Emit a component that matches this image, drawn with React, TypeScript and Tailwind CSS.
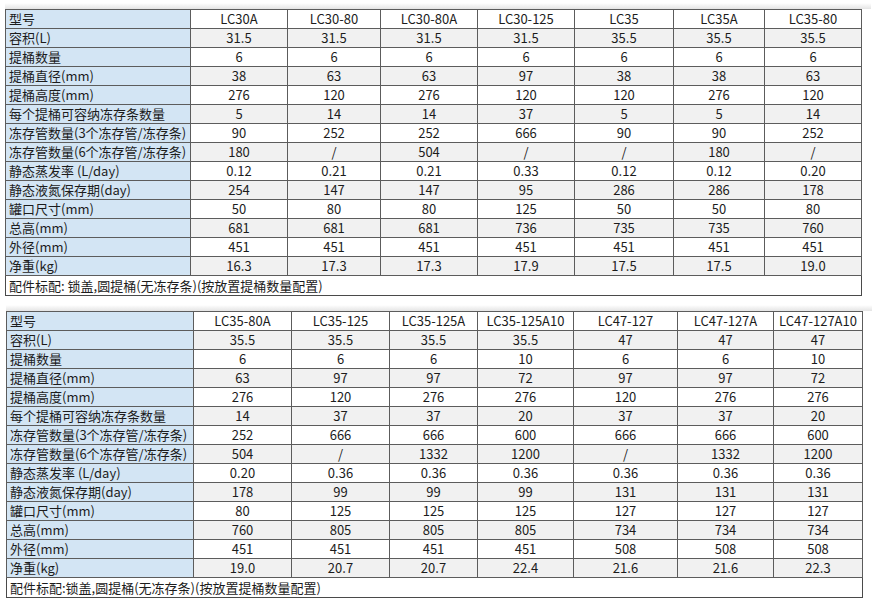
const labels = [
  "型号",
  "容积(L)",
  "提桶数量",
  "提桶直径(mm)",
  "提桶高度(mm)",
  "每个提桶可容纳冻存条数量",
  "冻存管数量(3个冻存管/冻存条)",
  "冻存管数量(6个冻存管/冻存条)",
  "静态蒸发率 (L/day)",
  "静态液氮保存期(day)",
  "罐口尺寸(mm)",
  "总高(mm)",
  "外径(mm)",
  "净重(kg)",
];

type Spec = {
  widths: number[];
  columns: string[][];
  note: string;
};

const specs: Spec[] = [
  {
    widths: [185, 97, 93, 97, 97, 99, 91, 97],
    columns: [
      ["LC30A", "31.5", "6", "38", "276", "5", "90", "180", "0.12", "254", "50", "681", "451", "16.3"],
      ["LC30-80", "31.5", "6", "63", "120", "14", "252", "/", "0.21", "147", "80", "681", "451", "17.3"],
      ["LC30-80A", "31.5", "6", "63", "276", "14", "252", "504", "0.21", "147", "80", "681", "451", "17.3"],
      ["LC30-125", "31.5", "6", "97", "120", "37", "666", "/", "0.33", "95", "125", "736", "451", "17.9"],
      ["LC35", "35.5", "6", "38", "120", "5", "90", "/", "0.12", "286", "50", "735", "451", "17.5"],
      ["LC35A", "35.5", "6", "38", "276", "5", "90", "180", "0.12", "286", "50", "735", "451", "17.5"],
      ["LC35-80", "35.5", "6", "63", "120", "14", "252", "/", "0.20", "178", "80", "760", "451", "19.0"],
    ],
    note: "配件标配: 锁盖,圆提桶(无冻存条)(按放置提桶数量配置)",
  },
  {
    widths: [187, 98, 98, 88, 96, 104, 96, 89],
    columns: [
      ["LC35-80A", "35.5", "6", "63", "276", "14", "252", "504", "0.20", "178", "80", "760", "451", "19.0"],
      ["LC35-125", "35.5", "6", "97", "120", "37", "666", "/", "0.36", "99", "125", "805", "451", "20.7"],
      ["LC35-125A", "35.5", "6", "97", "276", "37", "666", "1332", "0.36", "99", "125", "805", "451", "20.7"],
      ["LC35-125A10", "35.5", "10", "72", "276", "20", "600", "1200", "0.36", "99", "125", "805", "451", "22.4"],
      ["LC47-127", "47", "6", "97", "120", "37", "666", "/", "0.36", "131", "127", "734", "508", "21.6"],
      ["LC47-127A", "47", "6", "97", "276", "37", "666", "1332", "0.36", "131", "127", "734", "508", "21.6"],
      ["LC47-127A10", "47", "10", "72", "276", "20", "600", "1200", "0.36", "131", "127", "734", "508", "22.3"],
    ],
    note: "配件标配:锁盖,圆提桶(无冻存条)(按放置提桶数量配置)",
  },
];

function SpecTable({ spec }: { spec: Spec }) {
  const total = spec.widths.reduce((a, b) => a + b, 0);
  return (
    <div className="flex flex-col">
      <div className="h-[6px] w-[866px] bg-gradient-to-b from-white to-[#e4e4e4]" />
      <table
        className="table-fixed border-collapse border border-[#4a4a4a] text-[13px] text-[#1c1c1c]"
        style={{ width: total }}
      >
        <colgroup>
          {spec.widths.map((w, i) => (
            <col key={i} style={{ width: w }} />
          ))}
        </colgroup>
        <tbody>
          {labels.map((label, r) => (
            <tr key={label} className={r % 2 === 1 ? "h-[19px] bg-[#f1f1f1]" : "h-[19px] bg-white"}>
              <td className="border border-[#5c5c5c] bg-[#d3e5f4] px-[3px] py-0 text-left leading-[18px] whitespace-nowrap">
                {label}
              </td>
              {spec.columns.map((col, c) => (
                <td key={c} className="border border-[#5c5c5c] p-0 text-center leading-[18px]">
                  {col[r]}
                </td>
              ))}
            </tr>
          ))}
          <tr className="h-[20px] bg-white">
            <td colSpan={8} className="border border-[#4a4a4a] px-[3px] py-0 text-left leading-[18px]">
              {spec.note}
            </td>
          </tr>
        </tbody>
      </table>
    </div>
  );
}

export default function App() {
  return (
    <div className="h-[605px] w-[872px] bg-white font-['Noto_Sans_CJK_SC','Noto_Sans',sans-serif]">
      <div className="flex flex-col gap-[9px] pl-[4px] pt-[3px]">
        <div className="pl-[1px]">
          <SpecTable spec={specs[0]} />
        </div>
        <div className="pl-[2px]">
          <SpecTable spec={specs[1]} />
        </div>
      </div>
    </div>
  );
}
